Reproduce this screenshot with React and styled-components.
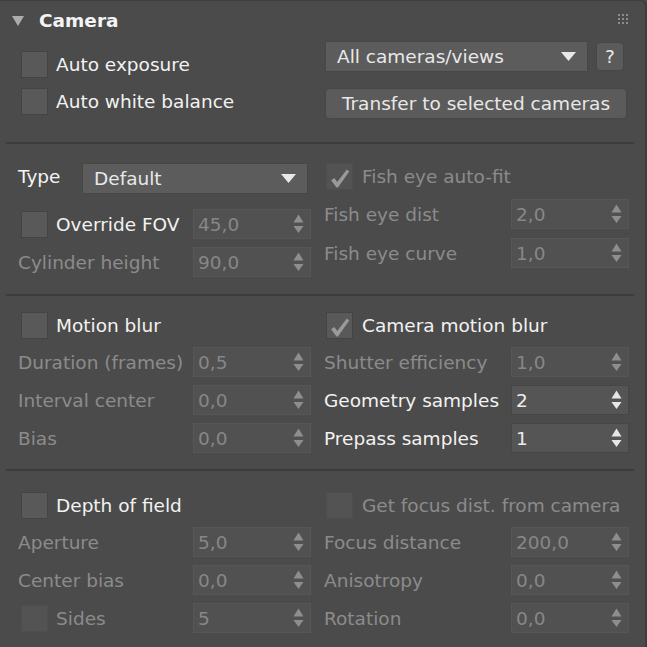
import React from "react";
import styled, { createGlobalStyle } from "styled-components";

const GlobalStyle = createGlobalStyle`
  html, body {
    margin: 0;
    padding: 0;
    background: #4b4b4b;
  }
  * { box-sizing: border-box; }
`;

const Panel = styled.div`
  width: 647px;
  height: 647px;
  background: #4b4b4b;
  border-top: 1px solid #3e3e3e;
  border-right: 2px solid #3e3e3e;
  border-top-right-radius: 6px;
  overflow: hidden;
  font-family: "DejaVu Sans", "Liberation Sans", sans-serif;
  font-size: 18.5px;
  color: #f2f2f2;
`;

const Header = styled.div`
  height: 40px;
  display: flex;
  align-items: center;
  padding: 0 17px 0 12px;
`;

const HeaderTitle = styled.div`
  flex: 1;
  margin-left: 15px;
  font-weight: bold;
  font-size: 18.5px;
  color: #f4f4f4;
  padding-bottom: 2px;
`;

const Grip = styled.div`
  display: grid;
  grid-template-columns: repeat(3, 2px);
  grid-template-rows: repeat(3, 2px);
  gap: 2px;
  margin-bottom: 4px;
  span {
    background: #8d8d8d;
  }
`;

const Section = styled.div`
  display: grid;
  grid-template-columns: 293px 305px;
  column-gap: 13px;
  padding: 0 18px;
  height: ${(p) => p.h}px;
`;

const Column = styled.div`
  display: flex;
  flex-direction: column;
  padding-top: ${(p) => p.pt || 0}px;
  gap: ${(p) => p.gap || 8}px;
`;

const Divider = styled.div`
  height: 2px;
  margin: 0 11px 0 6px;
  background: #3c3c3c;
`;

const Row = styled.div`
  display: flex;
  align-items: center;
  height: ${(p) => p.h || 30}px;
  margin-top: ${(p) => p.mt || 0}px;
`;

const Label = styled.span`
  flex: 1;
  white-space: nowrap;
  color: ${(p) => (p.disabled ? "#8b8b8b" : "#f2f2f2")};
`;

const TypeLabel = styled.span`
  width: 64px;
  flex: none;
  margin-top: -4px;
  color: #f4f4f4;
`;

const Box = styled.span`
  width: 27px;
  height: 27px;
  flex: none;
  margin-left: ${(p) => p.ml}px;
  margin-right: ${(p) => p.mr}px;
  background: ${(p) => (p.disabled ? "#535353" : "#595959")};
  border: 1px solid ${(p) => (p.disabled ? "#4e4e4e" : "#444444")};
  display: flex;
  align-items: center;
  justify-content: center;
`;

const Field = styled.div`
  width: 118px;
  height: 30px;
  flex: none;
  display: flex;
  align-items: center;
  padding: 0 6px 0 4px;
  background: ${(p) => (p.disabled ? "#515151" : "#555555")};
  border: 1px solid ${(p) => (p.disabled ? "#575757" : "#464646")};
  color: ${(p) => (p.disabled ? "#878787" : "#ececec")};
`;

const FieldValue = styled.span`
  flex: 1;
`;

const Select = styled.div`
  width: ${(p) => p.w}px;
  height: 31px;
  flex: none;
  margin-left: ${(p) => p.ml || 0}px;
  display: flex;
  align-items: center;
  padding: 0 11px;
  background: #5c5c5c;
  border: 1px solid #474747;
  color: #e8e8e8;
`;

const SelectText = styled.span`
  flex: 1;
`;

const Button = styled.div`
  height: ${(p) => p.h || 31}px;
  width: ${(p) => p.w}px;
  margin-left: ${(p) => p.ml || 0}px;
  display: flex;
  align-items: center;
  justify-content: center;
  background: #5b5b5b;
  border: 1px solid #474747;
  border-radius: 4px;
  color: #e8e8e8;
`;

const Check = () => (
  <svg width="27" height="27" viewBox="0 0 27 27">
    <path d="M4.5 17.5 L8 15 L11 19.5 L21.5 6 L24 8 L12 25 Q11 26 10 25 Z" fill="#9a9a9a" />
  </svg>
);

const Spin = ({ disabled }) => {
  const c = disabled ? "#8e8e8e" : "#e6e6e6";
  return (
    <svg width="11" height="20" viewBox="0 0 11 20">
      <path d="M5.5 0.5 L10.5 8.5 L0.5 8.5 Z" fill={c} />
      <path d="M0.5 12 L10.5 12 L5.5 19 Z" fill={c} />
    </svg>
  );
};

const Arrow = () => (
  <svg width="15" height="9" viewBox="0 0 15 9">
    <path d="M0 0 L15 0 L7.5 9 Z" fill="#e8e8e8" />
  </svg>
);

const Checkbox = ({ label, checked, disabled, boxDisabled, ml = 3, mr = 8 }) => (
  <Row h={27}>
    <Box ml={ml} mr={mr} disabled={boxDisabled}>
      {checked && <Check />}
    </Box>
    <Label disabled={disabled}>{label}</Label>
  </Row>
);

const SpinField = ({ value, disabled }) => (
  <Field disabled={disabled}>
    <FieldValue>{value}</FieldValue>
    <Spin disabled={disabled} />
  </Field>
);

const NumberRow = ({ label, value, disabled }) => (
  <Row>
    <Label disabled={disabled}>{label}</Label>
    <SpinField value={value} disabled={disabled} />
  </Row>
);

export default function App() {
  return (
    <>
      <GlobalStyle />
      <Panel>
        <Header>
          <svg width="12" height="10" viewBox="0 0 12 10">
            <path d="M0 0 L12 0 L6 10 Z" fill="#acacac" />
          </svg>
          <HeaderTitle>Camera</HeaderTitle>
          <Grip>
            {Array.from({ length: 9 }).map((_, i) => (
              <span key={i} />
            ))}
          </Grip>
        </Header>

        <Section h={101}>
          <Column pt={10} gap={10}>
            <Checkbox label="Auto exposure" />
            <Checkbox label="Auto white balance" />
          </Column>
          <Column gap={16}>
            <Row h={31}>
              <Select w={263} ml={1}>
                <SelectText>All cameras/views</SelectText>
                <Arrow />
              </Select>
              <Button w={28} h={29} ml={8}>?</Button>
            </Row>
            <Row h={31}>
              <Button w={302} ml={1}>Transfer to selected cameras</Button>
            </Row>
          </Column>
        </Section>

        <Divider />

        <Section h={150}>
          <Column pt={19} gap={8}>
            <Row h={31}>
              <TypeLabel>Type</TypeLabel>
              <Select w={226}>
                <SelectText>Default</SelectText>
                <Arrow />
              </Select>
            </Row>
            <Row mt={7}>
              <Box ml={3} mr={8} />
              <Label>Override FOV</Label>
              <SpinField value="45,0" disabled />
            </Row>
            <NumberRow label="Cylinder height" value="90,0" disabled />
          </Column>
          <Column pt={19} gap={9}>
            <Checkbox label="Fish eye auto-fit" checked disabled boxDisabled ml={2} mr={9} />
            <NumberRow label="Fish eye dist" value="2,0" disabled />
            <NumberRow label="Fish eye curve" value="1,0" disabled />
          </Column>
        </Section>

        <Divider />

        <Section h={173}>
          <Column pt={16} gap={8}>
            <Checkbox label="Motion blur" />
            <NumberRow label="Duration (frames)" value="0,5" disabled />
            <NumberRow label="Interval center" value="0,0" disabled />
            <NumberRow label="Bias" value="0,0" disabled />
          </Column>
          <Column pt={16} gap={8}>
            <Checkbox label="Camera motion blur" checked ml={2} mr={9} />
            <NumberRow label="Shutter efficiency" value="1,0" disabled />
            <NumberRow label="Geometry samples" value="2" />
            <NumberRow label="Prepass samples" value="1" />
          </Column>
        </Section>

        <Divider />

        <Section h={176}>
          <Column pt={21} gap={8}>
            <Checkbox label="Depth of field" />
            <NumberRow label="Aperture" value="5,0" disabled />
            <NumberRow label="Center bias" value="0,0" disabled />
            <Row>
              <Box ml={3} mr={8} disabled />
              <Label disabled>Sides</Label>
              <SpinField value="5" disabled />
            </Row>
          </Column>
          <Column pt={21} gap={8}>
            <Checkbox label="Get focus dist. from camera" disabled boxDisabled ml={2} mr={9} />
            <NumberRow label="Focus distance" value="200,0" disabled />
            <NumberRow label="Anisotropy" value="0,0" disabled />
            <NumberRow label="Rotation" value="0,0" disabled />
          </Column>
        </Section>
      </Panel>
    </>
  );
}
